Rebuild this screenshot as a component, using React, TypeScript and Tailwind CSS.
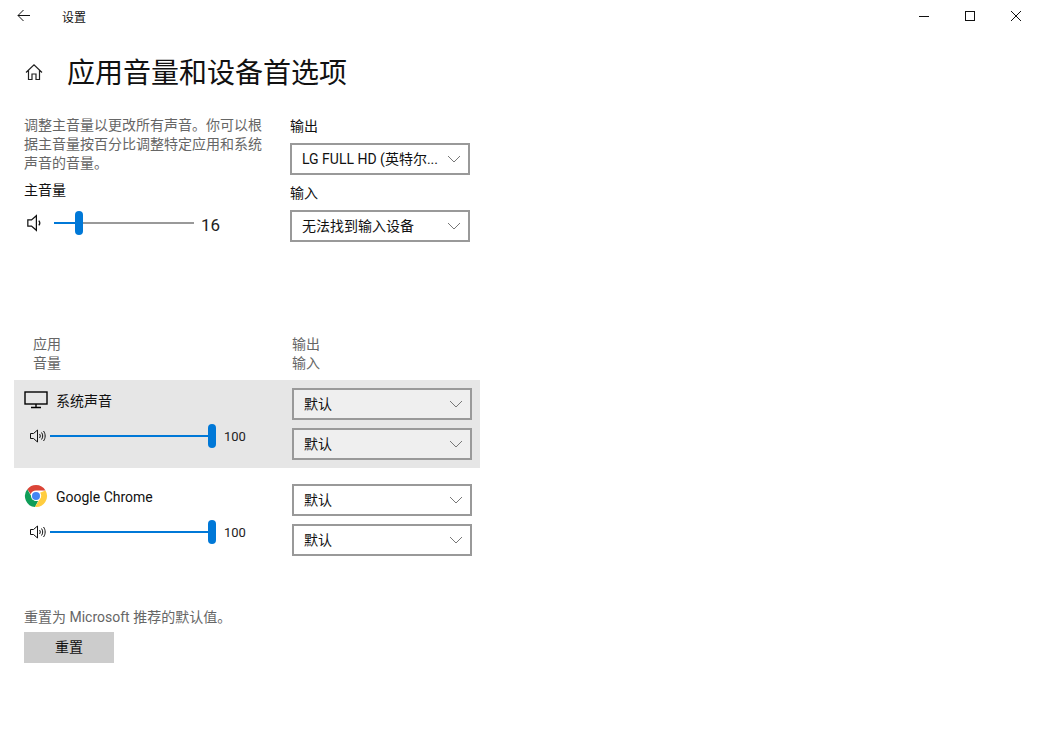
function Chevron() {
  return (
    <svg width="14" height="8" viewBox="0 0 14 8" fill="none" stroke="#777" strokeWidth="1" className="shrink-0">
      <path d="M1 1l6 6 6-6" />
    </svg>
  );
}

function Select({ label, tint }: { label: string; tint?: boolean }) {
  return (
    <div className={`flex h-[32px] w-[180px] items-center justify-between border-2 border-[#999999] pl-[10px] pr-[7px] text-[14px] text-[#111] ${tint ? "bg-[#efefef]" : "bg-white"}`}>
      <span className="whitespace-nowrap">{label}</span>
      <Chevron />
    </div>
  );
}

function Speaker() {
  return (
    <svg width="18" height="16" viewBox="0 0 18 16" fill="none" stroke="#111" strokeWidth="1" className="shrink-0">
      <path d="M1.5 5.5h3l4-3.5v12l-4-3.5h-3z" />
      <path d="M10.5 6c1 1.2 1 2.8 0 4" />
      <path d="M12.5 4.5c1.6 2 1.6 5 0 7" />
      <path d="M14.5 3c2.2 3 2.2 7 0 10" />
    </svg>
  );
}

function MasterSpeaker() {
  return (
    <svg width="22" height="20" viewBox="0 0 18 16" fill="none" stroke="#111" strokeWidth="1" className="shrink-0">
      <path d="M1.5 5.5h3l4-3.5v12l-4-3.5h-3z" />
      <path d="M10.5 6c1 1.2 1 2.8 0 4" />
    </svg>
  );
}

function Monitor() {
  return (
    <svg width="24" height="18" viewBox="0 0 24 18" fill="none" stroke="#000" strokeWidth="1.4" className="shrink-0">
      <rect x="1" y="1" width="22" height="12" />
      <path d="M12 13v3M7 16.5h10" />
    </svg>
  );
}

function Chrome() {
  return (
    <svg width="24" height="24" viewBox="0 0 48 48" className="shrink-0">
      <path fill="#db4437" d="M24 2a22 22 0 0 1 19 11H24a11 11 0 0 0-10.5 7.5L6.6 10.5A22 22 0 0 1 24 2z" />
      <path fill="#0f9d58" d="M6.6 10.5l9.8 17a9 9 0 0 0 12 6L22 46A22 22 0 0 1 6.6 10.5z" />
      <path fill="#ffcd40" d="M43 13a22 22 0 0 1-21 33l9.6-16.6A9 9 0 0 0 32 17.5z" />
      <circle cx="24" cy="24" r="10" fill="#fff" />
      <circle cx="24" cy="24" r="8" fill="#4285f4" />
    </svg>
  );
}

function AppSlider() {
  return (
    <div className="flex items-center pl-[5px]">
      <Speaker />
      <div className="ml-[3px] h-[2px] w-[158px] bg-[#0078d7]" />
      <div className="h-[24px] w-[8px] rounded-full bg-[#0078d7]" />
      <span className="ml-[8px] mt-[2px] text-[13px] text-[#222]">100</span>
    </div>
  );
}

function AppRow({ icon, name, tint }: { icon: React.ReactNode; name: string; tint?: boolean }) {
  return (
    <div className={`flex h-[88px] w-[466px] ${tint ? "bg-[#e6e6e6]" : ""}`}>
      <div className="w-[278px] pl-[10px]">
        <div className="mt-[8px] flex h-[24px] items-center gap-[8px]">
          <span className="flex w-[24px] items-center justify-center">{icon}</span>
          <span className="mt-[2px] text-[14px] text-[#111]">{name}</span>
        </div>
        <div className="mt-[12px]"><AppSlider /></div>
      </div>
      <div className="flex flex-col gap-[8px] pt-[8px]">
        <Select label="默认" tint={tint} />
        <Select label="默认" tint={tint} />
      </div>
    </div>
  );
}

export default function App() {
  return (
    <div className="h-[742px] w-[1039px] overflow-hidden bg-white text-[#111]" style={{ fontFamily: 'Roboto, "Noto Sans CJK SC", sans-serif' }}>
      {/* title bar */}
      <div className="flex h-[32px] items-center justify-between">
        <div className="flex items-center">
          <svg width="16" height="14" viewBox="0 0 16 14" fill="none" stroke="#111" strokeWidth="1" className="ml-[16px]">
            <path d="M14 6.5H2M7.5 1L2 6.5 7.5 12" />
          </svg>
          <span className="ml-[30px] mt-[3px] text-[12px]">设置</span>
        </div>
        <div className="flex items-center">
          <svg width="46" height="32" viewBox="0 0 46 32" fill="none" stroke="#111"><path d="M18 16.5h10" /></svg>
          <svg width="46" height="32" viewBox="0 0 46 32" fill="none" stroke="#111"><rect x="18.5" y="11.5" width="9" height="9" /></svg>
          <svg width="46" height="32" viewBox="0 0 46 32" fill="none" stroke="#111"><path d="M18 11l10 10M28 11L18 21" /></svg>
        </div>
      </div>

      {/* header */}
      <div className="mt-[16px] flex h-[48px] items-center pl-[25px]">
        <svg width="18" height="18" viewBox="0 0 18 18" fill="none" stroke="#222" strokeWidth="1.2">
          <path d="M1 9.5L9 1.8l8 7.7M3.5 7.5V16.5H7V11h4v5.5h3.5V7.5" />
        </svg>
        <h1 className="ml-[24px] mt-[4px] text-[28px] leading-none font-normal whitespace-nowrap">应用音量和设备首选项</h1>
      </div>

      {/* master */}
      <div className="mt-[20px] flex pl-[24px]">
        <div className="w-[266px]">
          <p className="w-[242px] text-[14px] leading-[19px] text-[#666]">调整主音量以更改所有声音。你可以根据主音量按百分比调整特定应用和系统声音的音量。</p>
          <div className="mt-[7px] text-[14px] leading-[20px]">主音量</div>
          <div className="mt-[11px] flex items-center pl-[2px]">
            <MasterSpeaker />
            <div className="ml-[6px] h-[2px] w-[21px] bg-[#0078d7]" />
            <div className="h-[24px] w-[8px] rounded-full bg-[#0078d7]" />
            <div className="h-[2px] w-[111px] bg-[#999999]" />
            <span className="ml-[7px] mt-[4px] text-[17px] leading-none text-[#222]">16</span>
          </div>
        </div>
        <div>
          <div className="text-[14px] leading-[20px]">输出</div>
          <div className="mt-[7px]"><Select label="LG FULL HD (英特尔..." /></div>
          <div className="mt-[8px] text-[14px] leading-[20px]">输入</div>
          <div className="mt-[7px]"><Select label="无法找到输入设备" /></div>
        </div>
      </div>

      {/* table header */}
      <div className="mt-[93px] flex pl-[33px] text-[14px] leading-[19px] text-[#666]">
        <div className="w-[259px]">应用<br />音量</div>
        <div>输出<br />输入</div>
      </div>

      {/* apps */}
      <div className="mt-[7px] ml-[14px] flex flex-col gap-[8px]">
        <AppRow icon={<Monitor />} name="系统声音" tint />
        <AppRow icon={<Chrome />} name="Google Chrome" />
      </div>

      {/* reset */}
      <div className="mt-[43px] pl-[24px]">
        <div className="text-[14px] leading-[20px] text-[#666]">重置为 Microsoft 推荐的默认值。</div>
        <button className="mt-[5px] block h-[31px] w-[90px] bg-[#cccccc] text-[14px] text-[#111]">重置</button>
      </div>
    </div>
  );
}
